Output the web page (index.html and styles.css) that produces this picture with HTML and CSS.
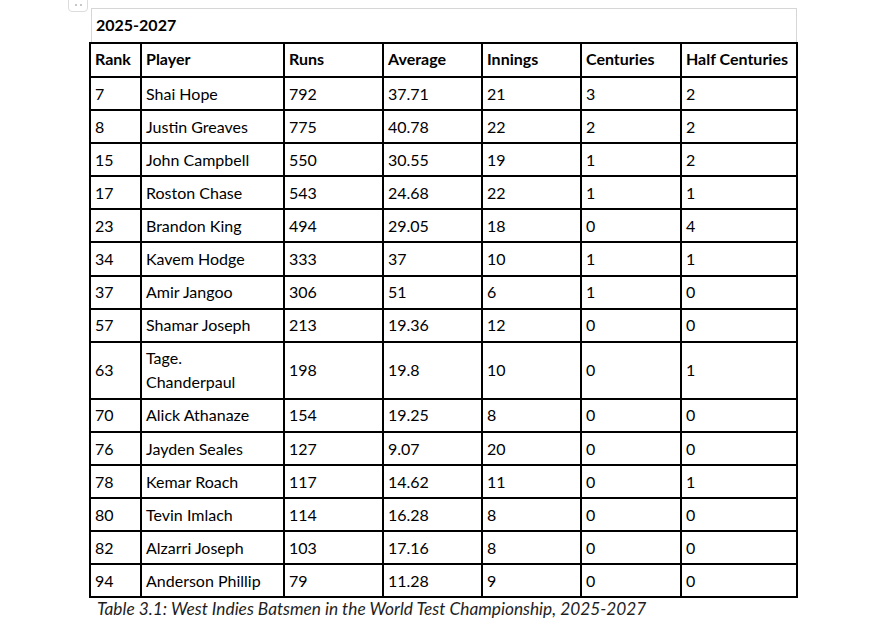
FILE: index.html
```html
<!DOCTYPE html>
<html lang="en">
<head>
<meta charset="utf-8">
<title>West Indies Batsmen</title>
<link rel="stylesheet" href="styles.css">
</head>
<body>
<div class="page">
  <div class="sheet">
    <div class="handle"><span class="dot"></span><span class="dot"></span></div>
    <div class="title">2025-2027</div>
    <table class="stats">
      <colgroup>
        <col class="c-rank"><col class="c-player"><col class="c-num"><col class="c-num"><col class="c-num"><col class="c-cent"><col class="c-half">
      </colgroup>
      <thead>
        <tr><th>Rank</th><th>Player</th><th>Runs</th><th>Average</th><th>Innings</th><th>Centuries</th><th>Half Centuries</th></tr>
      </thead>
      <tbody>
        <tr><td>7</td><td>Shai Hope</td><td>792</td><td>37.71</td><td>21</td><td>3</td><td>2</td></tr>
        <tr><td>8</td><td>Justin Greaves</td><td>775</td><td>40.78</td><td>22</td><td>2</td><td>2</td></tr>
        <tr><td>15</td><td>John Campbell</td><td>550</td><td>30.55</td><td>19</td><td>1</td><td>2</td></tr>
        <tr><td>17</td><td>Roston Chase</td><td>543</td><td>24.68</td><td>22</td><td>1</td><td>1</td></tr>
        <tr><td>23</td><td>Brandon King</td><td>494</td><td>29.05</td><td>18</td><td>0</td><td>4</td></tr>
        <tr><td>34</td><td>Kavem Hodge</td><td>333</td><td>37</td><td>10</td><td>1</td><td>1</td></tr>
        <tr><td>37</td><td>Amir Jangoo</td><td>306</td><td>51</td><td>6</td><td>1</td><td>0</td></tr>
        <tr><td>57</td><td>Shamar Joseph</td><td>213</td><td>19.36</td><td>12</td><td>0</td><td>0</td></tr>
        <tr><td>63</td><td>Tage.<br>Chanderpaul</td><td>198</td><td>19.8</td><td>10</td><td>0</td><td>1</td></tr>
        <tr><td>70</td><td>Alick Athanaze</td><td>154</td><td>19.25</td><td>8</td><td>0</td><td>0</td></tr>
        <tr><td>76</td><td>Jayden Seales</td><td>127</td><td>9.07</td><td>20</td><td>0</td><td>0</td></tr>
        <tr><td>78</td><td>Kemar Roach</td><td>117</td><td>14.62</td><td>11</td><td>0</td><td>1</td></tr>
        <tr><td>80</td><td>Tevin Imlach</td><td>114</td><td>16.28</td><td>8</td><td>0</td><td>0</td></tr>
        <tr><td>82</td><td>Alzarri Joseph</td><td>103</td><td>17.16</td><td>8</td><td>0</td><td>0</td></tr>
        <tr><td>94</td><td>Anderson Phillip</td><td>79</td><td>11.28</td><td>9</td><td>0</td><td>0</td></tr>
      </tbody>
    </table>
    <div class="caption">Table 3.1: West Indies Batsmen in the World Test Championship, 2025-2027</div>
  </div>
</div>
</body>
</html>
```
FILE: styles.css
```css
html, body {
  margin: 0;
  padding: 0;
  background: #ffffff;
}

body {
  font-family: Lato, "Open Sans", "Liberation Sans", sans-serif;
  color: #000;
}

.page {
  padding: 8px 0 0 89px;
}

.sheet {
  position: relative;
  width: 708px;
}

.handle {
  position: absolute;
  left: -21px;
  top: -14px;
  width: 20px;
  height: 18px;
  box-sizing: border-box;
  border: 1px solid #dcdcdc;
  border-radius: 4px;
  background: #fff;
  display: flex;
  align-items: flex-end;
  justify-content: center;
  gap: 3px;
  padding-bottom: 5px;
}

.dot {
  width: 2px;
  height: 2px;
  border-radius: 50%;
  background: #b5b5b5;
}

.title {
  margin-left: 2px;
  border: 1px solid #d6d6d6;
  border-bottom: 0;
  height: 33px;
  line-height: 32px;
  padding-left: 4px;
  font-weight: bold;
  font-size: 16px;
}

.stats {
  border-collapse: collapse;
  table-layout: fixed;
  width: 708px;
  font-size: 16px;
}

.c-rank { width: 51px; }
.c-player { width: 143px; }
.c-num { width: 99px; }
.c-cent { width: 100px; }
.c-half { width: 116px; }

.stats th,
.stats td {
  border: 2px solid #000;
  padding: 3.6px 4px 3.5px 4px;
  line-height: 24px;
  text-align: left;
  vertical-align: middle;
  white-space: nowrap;
}

.stats th {
  font-weight: bold;
  padding-top: 3px;
  padding-bottom: 5px;
}

.caption {
  font-style: italic;
  font-size: 17.3px;
  color: #1e1e1e;
  padding-left: 8px;
  margin-top: 0;
}
```
